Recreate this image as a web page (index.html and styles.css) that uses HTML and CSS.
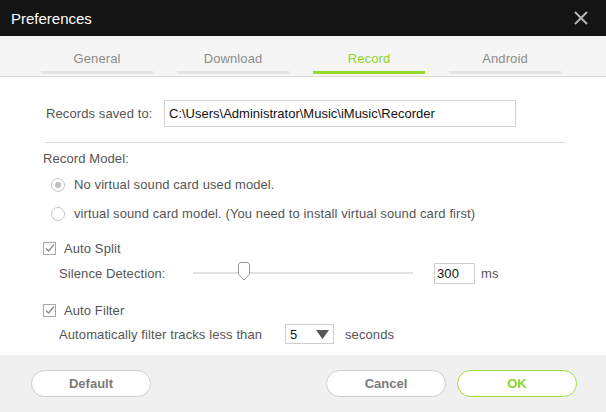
FILE: index.html
```html
<!DOCTYPE html>
<html lang="en">

<head>
    <meta charset="UTF-8">
    <title>Preferences</title>
    <link rel="stylesheet" href="styles.css">
</head>

<body>
    <div class="window">
        <!-- Title bar -->
        <div class="titlebar">
            <span class="title">Preferences</span>
            <svg class="close" width="14" height="14" viewBox="0 0 14 14">
                <path d="M1 1 L13 13 M13 1 L1 13" stroke="#b4b4b4" stroke-width="2" />
            </svg>
        </div>

        <!-- Tabs -->
        <div class="tabs">
            <div class="tab">General</div>
            <div class="tab">Download</div>
            <div class="tab active">Record</div>
            <div class="tab">Android</div>
        </div>

        <!-- Record settings -->
        <div class="content">
            <div class="save-row">
                <span class="label">Records saved to:</span>
                <div class="path-box">C:\Users\Administrator\Music\iMusic\Recorder</div>
            </div>
            <div class="divider"></div>

            <div class="section-title">Record Model:</div>
            <div class="radio-row">
                <span class="radio checked"></span>
                <span>No virtual sound card used model.</span>
            </div>
            <div class="radio-row">
                <span class="radio"></span>
                <span>virtual sound card model. (You need to install virtual sound card first)</span>
            </div>

            <div class="check-row">
                <svg class="checkbox" width="13" height="13" viewBox="0 0 13 13">
                    <rect x="0.5" y="0.5" width="12" height="12" fill="#fff" stroke="#a8a8a8" />
                    <path d="M3 6.5 L5.5 9 L11 2.5" fill="none" stroke="#8a8a8a" stroke-width="1.2" />
                </svg>
                <span>Auto Split</span>
            </div>
            <div class="sub-row">
                <span class="sub-label">Silence Detection:</span>
                <div class="slider">
                    <div class="track"></div>
                    <svg class="thumb" width="14" height="19" viewBox="0 0 14 19">
                        <path d="M1.5 3 Q1.5 0.5 4 0.5 L10 0.5 Q12.5 0.5 12.5 3 L12.5 12 L7 18 L1.5 12 Z" fill="#fff" stroke="#9a9a9a" />
                    </svg>
                </div>
                <div class="num-box">300</div>
                <span class="unit">ms</span>
            </div>

            <div class="check-row filter">
                <svg class="checkbox" width="13" height="13" viewBox="0 0 13 13">
                    <rect x="0.5" y="0.5" width="12" height="12" fill="#fff" stroke="#a8a8a8" />
                    <path d="M3 6.5 L5.5 9 L11 2.5" fill="none" stroke="#8a8a8a" stroke-width="1.2" />
                </svg>
                <span>Auto Filter</span>
            </div>
            <div class="sub-row short">
                <span class="filter-label">Automatically filter tracks less than</span>
                <div class="select">
                    <span>5</span>
                    <svg width="13" height="9" viewBox="0 0 13 9">
                        <path d="M0 0 L13 0 L6.5 9 Z" fill="#555" />
                    </svg>
                </div>
                <span class="unit">seconds</span>
            </div>
        </div>

        <!-- Footer buttons -->
        <div class="footer">
            <button class="btn">Default</button>
            <div class="spacer"></div>
            <button class="btn">Cancel</button>
            <button class="btn ok">OK</button>
        </div>
    </div>
</body>

</html>
```

FILE: styles.css
```css
/* Basic Reset */
* {
    margin: 0;
    padding: 0;
    box-sizing: border-box;
}

body {
    font-family: "Liberation Sans", Arial, sans-serif;
    font-size: 13px;
    letter-spacing: 0.1px;
    color: #555;
    background-color: #fff;
}

.window {
    width: 606px;
    height: 412px;
    display: flex;
    flex-direction: column;
}

/* Title bar */
.titlebar {
    height: 36px;
    background-color: #141414;
    display: flex;
    align-items: center;
    justify-content: space-between;
    padding: 0 18px 0 11px;
}

.title {
    color: #fff;
    font-size: 15px;
    letter-spacing: 0;
}

/* Tabs */
.tabs {
    height: 41px;
    background-color: #f5f5f5;
    border-bottom: 1px solid #dcdcdc;
    display: flex;
    gap: 24px;
    padding-left: 41px;
}

.tab {
    width: 112px;
    height: 38px;
    display: flex;
    align-items: center;
    justify-content: center;
    padding-top: 10px;
    color: #8c8c8c;
    font-size: 13px;
    border-bottom: 3px solid #e4e4e4;
}

.tab.active {
    color: #8fd62a;
    border-bottom-color: #96d92c;
}

/* Content */
.content {
    flex: 1;
    padding: 23px 0 0 43px;
}

.save-row {
    display: flex;
    align-items: center;
    padding-left: 3px;
}

.label {
    width: 118px;
}

.path-box {
    width: 352px;
    height: 27px;
    border: 1px solid #d4d4d4;
    padding: 0 4px;
    display: flex;
    align-items: center;
    color: #111;
    font-size: 13px;
    letter-spacing: 0;
}

.divider {
    width: 520px;
    height: 1px;
    background-color: #d8d8d8;
    margin: 15px 0 0 2px;
}

.section-title {
    height: 24px;
    display: flex;
    align-items: center;
    margin-top: 3px;
}

.radio-row {
    height: 29px;
    display: flex;
    align-items: center;
    gap: 9px;
    padding-left: 8px;
}

.radio {
    width: 14px;
    height: 14px;
    border: 1px solid #c4c4c4;
    border-radius: 50%;
    display: flex;
    align-items: center;
    justify-content: center;
}

.radio.checked::after {
    content: "";
    width: 6px;
    height: 6px;
    border-radius: 50%;
    background-color: #bcbcbc;
}

.check-row {
    height: 26px;
    display: flex;
    align-items: center;
    gap: 8px;
    margin-top: 7px;
}

.check-row.filter {
    margin-top: 12px;
}

.sub-row {
    height: 24px;
    display: flex;
    align-items: center;
    padding-left: 16px;
}

.sub-row.short {
    height: 22px;
}

.sub-label {
    width: 134px;
}

/* Slider */
.slider {
    width: 220px;
    height: 20px;
    position: relative;
    display: flex;
    align-items: center;
}

.track {
    width: 100%;
    height: 2px;
    background-color: #e2e2e2;
}

.thumb {
    position: absolute;
    left: 44px;
    top: -1px;
}

.num-box {
    width: 41px;
    height: 21px;
    border: 1px solid #cfcfcf;
    margin-left: 21px;
    padding-left: 2px;
    display: flex;
    align-items: center;
    color: #111;
}

.unit {
    margin-left: 6px;
}

.filter-label {
    width: 226px;
}

.select {
    width: 49px;
    height: 20px;
    border: 1px solid #cfcfcf;
    display: flex;
    align-items: center;
    justify-content: space-between;
    padding: 0 4px 0 4px;
    color: #111;
    margin-right: 5px;
}

/* Footer */
.footer {
    height: 57px;
    background-color: #f0f0f0;
    display: flex;
    align-items: center;
    padding: 0 29px 0 31px;
    gap: 11px;
}

.spacer {
    flex: 1;
}

.btn {
    width: 120px;
    height: 27px;
    border: 1px solid #cdcdcd;
    border-radius: 14px;
    background-color: #fff;
    font-family: "Liberation Sans", Arial, sans-serif;
    font-size: 13px;
    font-weight: bold;
    color: #7a7a7a;
}

.btn.ok {
    border-color: #9edd3c;
    color: #8ed42a;
}
```
